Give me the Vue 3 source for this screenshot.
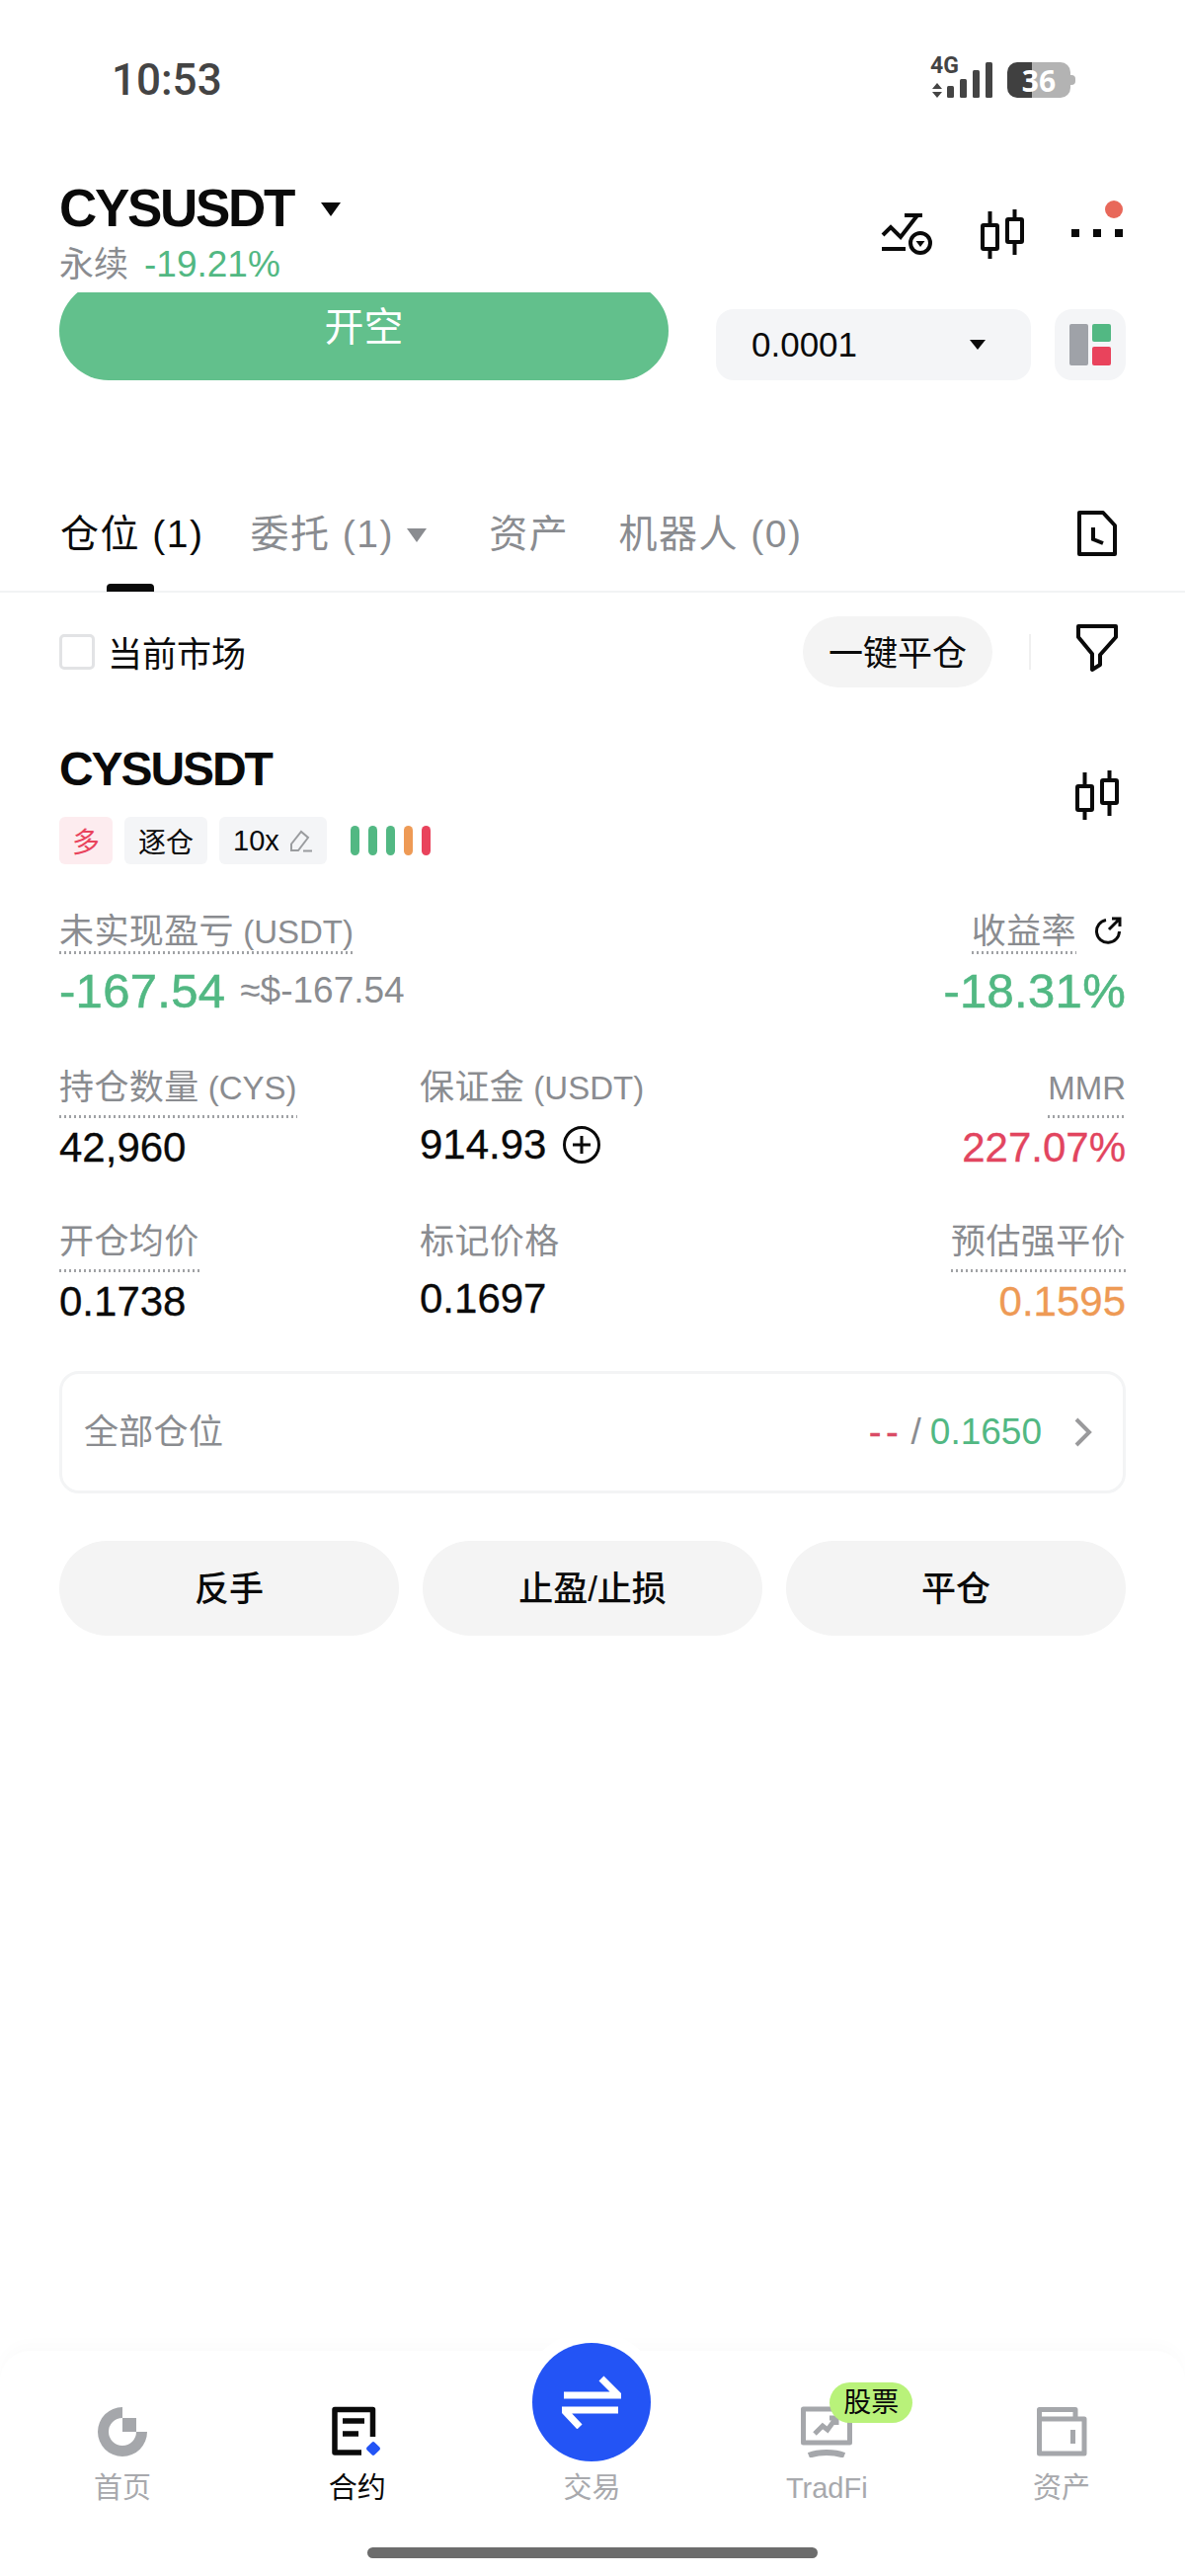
<template>
  <div class="page">
    <div class="status">
      <div class="time">10:53</div>
      <div class="status-right">
        <span class="net">4G</span>
        <svg class="signal" width="64" height="40" viewBox="0 0 64 40">
          <path d="M7 25l5 6H2zM7 40l5-6H2z" fill="#444" />
          <rect x="17" y="28" width="7" height="12" rx="1.5" fill="#444" />
          <rect x="30" y="21" width="7" height="19" rx="1.5" fill="#444" />
          <rect x="43" y="12" width="7" height="28" rx="1.5" fill="#444" />
          <rect x="56" y="4" width="7" height="36" rx="1.5" fill="#444" />
        </svg>
        <div class="battery"><span>36</span></div>
        <div class="battery-nub"></div>
      </div>
    </div>

    <div class="head">
      <div>
        <div class="symbol">
          <span>CYSUSDT</span>
          <i class="caret"></i>
        </div>
        <div class="sub">
          <span>永续</span>
          <span class="sub-pct">-19.21%</span>
        </div>
      </div>
      <div class="tools">
        <svg width="52" height="46" viewBox="0 0 52 46" fill="none" stroke="#0a0a0a" stroke-width="4">
          <path d="M2 24l8-8 10 10 17-22M24 4h18" />
          <path d="M1 38h24" />
          <circle cx="40" cy="32" r="10" />
          <path d="M35.5 30h9L40 36z" fill="#0a0a0a" stroke="none" />
        </svg>
        <svg class="candle" width="44" height="50" viewBox="0 0 44 50" fill="none" stroke="#0a0a0a" stroke-width="4">
          <path d="M9.500 2v14M9.500 40v10M34.500 0v10M34.500 33v13" />
          <rect x="2" y="16" width="15" height="24" rx="1" />
          <rect x="27" y="10" width="15" height="23" rx="1" />
        </svg>
        <div class="more">
          <i></i><i></i><i></i>
          <b class="more-dot"></b>
        </div>
      </div>
    </div>

    <div class="actions">
      <div class="open-clip">
        <div class="open-btn">开空</div>
      </div>
      <div class="step-select">
        <span>0.0001</span>
        <i class="caret small"></i>
      </div>
      <div class="layout-btn">
        <svg width="42" height="42" viewBox="0 0 42 42">
          <rect x="0" y="0" width="19" height="42" rx="2" fill="#9fa2a8" />
          <rect x="23" y="0" width="19" height="18" rx="2" fill="#52b883" />
          <rect x="23" y="23" width="19" height="19" rx="2" fill="#e9435c" />
        </svg>
      </div>
    </div>

    <div class="tabs">
      <div
        v-for="tab in tabs"
        :key="tab.name"
        class="tab"
        :class="{ active: tab.active }"
      >
        {{ tab.name }}
        <i v-if="tab.caret" class="caret tab-caret"></i>
        <b v-if="tab.active" class="tab-line"></b>
      </div>
      <svg class="history" width="42" height="48" viewBox="0 0 42 48" fill="none" stroke="#0a0a0a" stroke-width="4">
        <path d="M3 3h24l12 13v29H3z" stroke-linejoin="round" />
        <path d="M17 18v12l10 4" />
      </svg>
    </div>

    <div class="filter-row">
      <i class="checkbox"></i>
      <span class="filter-text">当前市场</span>
      <div class="close-all">一键平仓</div>
      <i class="divider"></i>
      <svg class="funnel" width="42" height="50" viewBox="0 0 42 50" fill="none" stroke="#0a0a0a" stroke-width="4" stroke-linejoin="round">
        <path d="M2 3h38v11L24 32v10l-8 5V31L2 14z" />
      </svg>
    </div>

    <div class="card-head">
      <div class="card-title">CYSUSDT</div>
      <svg class="card-candle" width="44" height="50" viewBox="0 0 44 50" fill="none" stroke="#0a0a0a" stroke-width="4">
        <path d="M9.500 2v14M9.500 40v10M34.500 0v10M34.500 33v13" />
        <rect x="2" y="16" width="15" height="24" rx="1" />
        <rect x="27" y="10" width="15" height="23" rx="1" />
      </svg>
    </div>

    <div class="tags">
      <div class="tag long">多</div>
      <div class="tag">逐仓</div>
      <div class="tag lev">
        10x
        <svg width="24" height="24" viewBox="0 0 24 24" fill="none" stroke="#9a9c9f" stroke-width="2">
          <path d="M2 15.500L12 3l7 6-10 13H2zM14 22.500h9" />
        </svg>
      </div>
      <div class="bars">
        <i v-for="(c, i) in bars" :key="i" :style="{ background: c }"></i>
      </div>
    </div>

    <div class="stats">
      <div
        v-for="s in stats"
        :key="s.label + s.unit"
        class="stat"
        :class="[s.col, { first: s.big, plain: s.plain }]"
      >
        <div class="label-row">
          <span class="label">{{ s.label }}<small v-if="s.unit">{{ s.unit }}</small></span>
          <svg v-if="s.share" class="share" width="28" height="28" viewBox="0 0 28 28" fill="none" stroke="#0a0a0a" stroke-width="3">
            <path d="M12 3.500A11.500 11.500 0 1 0 25.500 15" />
            <path d="M15 13L26 2M18 2h8v8" />
          </svg>
        </div>
        <div class="value" :class="s.color">
          {{ s.value }}
          <span v-if="s.usd" class="usd">{{ s.usd }}</span>
          <svg v-if="s.plus" class="plus" width="38" height="38" viewBox="0 0 38 38" fill="none" stroke="#0a0a0a" stroke-width="3">
            <circle cx="19" cy="19" r="17.500" />
            <path d="M19 10v18M10 19h18" />
          </svg>
        </div>
      </div>
    </div>

    <div class="all-pos">
      <span class="all-title">全部仓位</span>
      <div class="all-right">
        <span class="dashes">--</span>
        <span class="slash">/</span>
        <span class="green">0.1650</span>
        <svg width="18" height="30" viewBox="0 0 18 30" fill="none" stroke="#9a9a9c" stroke-width="4">
          <path d="M2 2l13 13L2 28" />
        </svg>
      </div>
    </div>

    <div class="btns">
      <div v-for="b in buttons" :key="b" class="btn">{{ b }}</div>
    </div>

    <div class="nav">
      <div class="nav-items">
        <div class="nav-item">
          <svg width="52" height="52" viewBox="0 0 52 52" fill="#a5a7ab">
            <path d="M26 1A25 25 0 1 0 51 26H40A14 14 0 1 1 26 12z" />
            <rect x="26" y="12" width="14" height="14" />
          </svg>
          <span>首页</span>
        </div>
        <div class="nav-item on">
          <svg width="52" height="52" viewBox="0 0 52 52" fill="none" stroke="#0a0a0a">
            <path d="M41.500 31V3.500H3V47h27" stroke-width="5.500" stroke-linejoin="round" />
            <path d="M11 15h22M11 28h16" stroke-width="5.500" />
            <rect x="36.500" y="37.500" width="11" height="11" rx="2" transform="rotate(45 42 43)" fill="#2354f5" stroke="none" />
          </svg>
          <span>合约</span>
        </div>
        <div class="nav-item trade">
          <div class="trade-btn">
            <svg width="60" height="54" viewBox="0 0 60 54" fill="none" stroke="#fff" stroke-width="7">
              <path d="M2 20h55L40 3M57 35H2l16 17" />
            </svg>
          </div>
          <span>交易</span>
        </div>
        <div class="nav-item">
          <div class="tradfi-icon">
            <svg width="52" height="52" viewBox="0 0 52 52" fill="none" stroke="#a5a7ab">
              <path d="M2.500 37V3h47v34z" stroke-width="5" stroke-linejoin="round" />
              <path d="M8 50c10-4 26-4 36 0" stroke-width="6" />
              <path d="M14 28l8-8 5 4 8-11M29 12h7v7" stroke-width="5" />
            </svg>
            <b class="stock-badge">股票</b>
          </div>
          <span class="latin">TradFi</span>
        </div>
        <div class="nav-item">
          <svg width="52" height="52" viewBox="0 0 52 52" fill="none" stroke="#a5a7ab" stroke-width="5" stroke-linejoin="round">
            <path d="M3.500 48V3.500H40V13h9v35zM3.500 13H40" />
            <rect x="35" y="24" width="5" height="14" fill="#a5a7ab" stroke="none" />
          </svg>
          <span>资产</span>
        </div>
      </div>
      <div class="home-bar"></div>
    </div>
  </div>
</template>

<script setup>
const tabs = [
  { name: "仓位 (1)", active: true },
  { name: "委托 (1)", caret: true },
  { name: "资产" },
  { name: "机器人 (0)" },
];

const bars = ["#52b883", "#52b883", "#52b883", "#ee9a55", "#e9435c"];

const stats = [
  { label: "未实现盈亏", unit: " (USDT)", value: "-167.54", usd: "≈$-167.54", color: "green", big: true },
  { label: "收益率", value: "-18.31%", color: "green", big: true, col: "col3", share: true },
  { label: "持仓数量", unit: " (CYS)", value: "42,960" },
  { label: "保证金", unit: " (USDT)", value: "914.93", plain: true, plus: true },
  { label: "", unit: "MMR", value: "227.07%", color: "red", col: "col3" },
  { label: "开仓均价", value: "0.1738" },
  { label: "标记价格", value: "0.1697", plain: true },
  { label: "预估强平价", value: "0.1595", color: "orange", col: "col3" },
];

const buttons = ["反手", "止盈/止损", "平仓"];
</script>

<style>
html,
body {
  margin: 0;
  background: #fff;
}
</style>

<style scoped>
.page {
  position: relative;
  width: 1200px;
  height: 2608px;
  display: flex;
  flex-direction: column;
  background: #fff;
  overflow: hidden;
  color: #0a0a0a;
  font-family: "Liberation Sans", "Noto Sans CJK SC", sans-serif;
}

.status {
  height: 121px;
  padding: 59px 111px 0 113px;
  display: flex;
  justify-content: space-between;
  align-items: flex-start;
}

.time {
  font-family: Roboto, sans-serif;
  font-weight: 500;
  font-size: 44px;
  line-height: 44px;
  color: #444;
}

.status-right {
  position: relative;
  display: flex;
  align-items: flex-start;
}

.net {
  position: absolute;
  left: 0;
  top: -4px;
  font-family: Roboto, sans-serif;
  font-weight: 700;
  font-size: 23px;
  line-height: 24px;
  color: #444;
}

.battery {
  margin: 4px 0 0 14px;
  width: 64px;
  height: 36px;
  border-radius: 10px;
  background: linear-gradient(to right, #404040 25px, #b3b3b3 25px);
  display: flex;
  align-items: center;
  justify-content: center;
  color: #fff;
  font-family: "Open Sans", sans-serif;
  font-weight: 700;
  font-size: 30px;
}

.battery-nub {
  margin-top: 17px;
  width: 5px;
  height: 10px;
  border-radius: 0 4px 4px 0;
  background: #b3b3b3;
}

.head {
  height: 116px;
  padding: 0 60px;
  display: flex;
  justify-content: space-between;
}

.symbol {
  display: flex;
  align-items: center;
  height: 60px;
  font-weight: 700;
  font-size: 53px;
  letter-spacing: -2.3px;
}

.caret {
  display: inline-block;
  width: 0;
  height: 0;
  border-left: 10px solid transparent;
  border-right: 10px solid transparent;
  border-top: 14px solid #0a0a0a;
}

.symbol .caret {
  margin: 4px 0 0 28px;
}

.sub {
  margin-top: 8px;
  font-size: 35px;
  line-height: 40px;
  color: #8a8c90;
}

.sub-pct {
  margin-left: 16px;
  font-size: 37px;
  color: #52b883;
}

.tools {
  display: flex;
  align-items: flex-start;
  padding: 32px 3px 0 0;
}

.tools > svg:first-child {
  margin-top: 2px;
}

.candle {
  margin-left: 49px;
}

.more {
  position: relative;
  margin-left: 48px;
  width: 52px;
  height: 36px;
  display: flex;
  justify-content: space-between;
  align-items: flex-start;
  padding-top: 20px;
  box-sizing: border-box;
}

.more i {
  width: 8px;
  height: 8px;
  background: #0a0a0a;
}

.more-dot {
  position: absolute;
  right: 0;
  top: -9px;
  width: 18px;
  height: 18px;
  border-radius: 50%;
  background: #e8685a;
}

.actions {
  height: 89px;
  padding: 0 60px;
  display: flex;
  align-items: flex-start;
}

.open-clip {
  width: 617px;
  height: 89px;
  overflow: hidden;
}

.open-btn {
  margin-top: -11px;
  height: 100px;
  padding-bottom: 14px;
  box-sizing: border-box;
  border-radius: 50px;
  background: #62c08c;
  color: #fff;
  font-size: 40px;
  display: flex;
  align-items: center;
  justify-content: center;
}

.step-select {
  margin: 17px 0 0 48px;
  width: 319px;
  height: 72px;
  padding: 0 46px 0 36px;
  box-sizing: border-box;
  border-radius: 18px;
  background: #f4f5f7;
  display: flex;
  align-items: center;
  justify-content: space-between;
  font-size: 35px;
}

.caret.small {
  border-left-width: 8px;
  border-right-width: 8px;
  border-top-width: 10px;
}

.layout-btn {
  margin: 17px 0 0 24px;
  width: 72px;
  height: 72px;
  border-radius: 18px;
  background: #f4f5f7;
  display: flex;
  align-items: center;
  justify-content: center;
}

.tabs {
  margin-top: 114px;
  height: 101px;
  box-sizing: border-box;
  padding: 17px 68px 0 61px;
  border-bottom: 2px solid #f2f3f4;
  display: flex;
  align-items: flex-start;
  gap: 47px;
}

.tab {
  position: relative;
  font-size: 39px;
  letter-spacing: 1.5px;
  line-height: 50px;
  white-space: nowrap;
  color: #8a8c90;
}

.tab:nth-child(4) {
  margin-left: 3px;
}

.tab.active {
  color: #0a0a0a;
}

.tab-caret {
  margin: 0 16px 4px 1px;
  vertical-align: middle;
  border-top-color: #8a8c90;
}

.tab-line {
  position: absolute;
  left: 47px;
  top: 75px;
  width: 48px;
  height: 8px;
  border-radius: 4px 4px 0 0;
  background: #0a0a0a;
}

.history {
  margin-left: auto;
}

.filter-row {
  margin-top: 24px;
  height: 72px;
  padding: 0 68px 0 60px;
  display: flex;
  align-items: center;
}

.checkbox {
  width: 36px;
  height: 36px;
  box-sizing: border-box;
  border: 3px solid #e2e3e5;
  border-radius: 5px;
}

.filter-text {
  margin: -2px 0 0 13px;
  font-size: 35px;
}

.close-all {
  margin-left: auto;
  width: 192px;
  height: 72px;
  padding-bottom: 3px;
  box-sizing: border-box;
  border-radius: 36px;
  background: #f4f4f4;
  display: flex;
  align-items: center;
  justify-content: center;
  font-size: 35px;
}

.divider {
  margin-left: 37px;
  width: 2px;
  height: 36px;
  background: #f0f0f0;
}

.funnel {
  margin: -8px 0 0 46px;
}

.card-head {
  margin-top: 58px;
  height: 50px;
  padding: 0 67px 0 60px;
  display: flex;
  justify-content: space-between;
  align-items: flex-start;
}

.card-title {
  font-weight: 700;
  font-size: 48px;
  letter-spacing: -2.1px;
  line-height: 50px;
}

.card-candle {
  margin-top: 26px;
}

.tags {
  margin-top: 23px;
  height: 48px;
  padding: 0 60px;
  display: flex;
  align-items: center;
  gap: 12px;
}

.tag {
  height: 48px;
  padding: 0 14px;
  border-radius: 6px;
  background: #f4f5f7;
  display: flex;
  align-items: center;
  font-size: 28px;
}

.tag.long {
  padding: 0 13px;
  background: #fdecef;
  color: #e9435c;
}

.tag.lev {
  gap: 10px;
  font-size: 29px;
}

.bars {
  margin-left: 12px;
  display: flex;
  gap: 9px;
}

.bars i {
  width: 9px;
  height: 30px;
  border-radius: 5px;
}

.stats {
  margin-top: 45px;
  padding: 0 60px;
  display: grid;
  grid-template-columns: 365px 1fr auto;
  row-gap: 50px;
}

.stat {
  display: flex;
  flex-direction: column;
  align-items: flex-start;
}

.stat.col3 {
  grid-column: 3;
  align-items: flex-end;
}

.label-row {
  display: flex;
  align-items: flex-start;
  height: 54px;
}

.label {
  height: 40px;
  padding: 3px 0 11px;
  font-size: 35px;
  letter-spacing: 0.4px;
  line-height: 40px;
  white-space: nowrap;
  color: #8a8c90;
  background-image: linear-gradient(to right, #a0a2a5 50%, transparent 50%);
  background-size: 5px 3px;
  background-position: left bottom;
  background-repeat: repeat-x;
}

.label small {
  font-size: 33px;
  letter-spacing: 0;
}

.stat.plain .label {
  background: none;
}

.stat.plain .label-row {
  height: 51px;
}

.stat.first .label-row {
  height: 46px;
}

.stat.first .label {
  padding-bottom: 3px;
}

.share {
  margin: 8px 4px 0 18px;
}

.value {
  margin-top: 8px;
  display: flex;
  align-items: center;
  height: 44px;
  font-size: 42px;
  white-space: nowrap;
  -webkit-text-stroke: 0.3px currentColor;
}

.stat.first .value {
  margin-top: 11px;
  height: 51px;
  font-size: 49px;
  letter-spacing: 0.3px;
  -webkit-text-stroke: 0.6px currentColor;
}

.usd {
  margin-left: 15px;
  font-size: 37px;
  letter-spacing: 0;
  color: #8a8c90;
  -webkit-text-stroke: 0;
}

.plus {
  margin-left: 17px;
}

.green {
  color: #52b883;
}

.red {
  color: #e2455f;
}

.orange {
  color: #ee9a55;
}

.all-pos {
  margin: 48px 60px 0;
  height: 124px;
  padding: 0 31px 0 22px;
  box-sizing: border-box;
  border: 3px solid #f3f4f5;
  border-radius: 20px;
  display: flex;
  align-items: center;
  justify-content: space-between;
}

.all-title {
  margin-top: -7px;
  font-size: 35px;
  letter-spacing: 0.3px;
  color: #8a8c90;
}

.all-right {
  display: flex;
  align-items: center;
  font-size: 37px;
}

.dashes {
  letter-spacing: 5px;
  color: #d94b66;
  -webkit-text-stroke: 0.6px currentColor;
}

.slash {
  margin: 0 9px 0 8px;
  color: #8a8c90;
}

.all-right svg {
  margin-left: 33px;
}

.btns {
  margin-top: 48px;
  padding: 0 60px;
  display: flex;
  gap: 24px;
}

.btn {
  flex: 1;
  height: 96px;
  padding-bottom: 5px;
  box-sizing: border-box;
  border-radius: 48px;
  background: #f4f4f4;
  display: flex;
  align-items: center;
  justify-content: center;
  font-size: 35px;
  font-weight: 500;
}

.nav {
  margin-top: auto;
  height: 228px;
  border-radius: 30px 30px 0 0;
  background: #fff;
  box-shadow: 0 -8px 14px rgba(0, 0, 0, 0.015);
}

.nav-items {
  padding: 56px 6px 0 5px;
  display: grid;
  grid-template-columns: repeat(5, 1fr);
}

.nav-item {
  display: flex;
  flex-direction: column;
  align-items: center;
}

.nav-item > span {
  margin-top: 13px;
  font-size: 29px;
  line-height: 36px;
  color: #a8a9ad;
}

.nav-item.on > span {
  color: #0a0a0a;
}

.trade-btn {
  margin: -64px 0 -4px;
  width: 120px;
  height: 120px;
  border-radius: 50%;
  background: #2354f5;
  box-shadow: 0 0 0 12px #fff;
  display: flex;
  align-items: center;
  justify-content: center;
}

.tradfi-icon {
  position: relative;
  width: 52px;
  height: 52px;
}

.stock-badge {
  position: absolute;
  left: 29px;
  top: -24px;
  width: 84px;
  height: 41px;
  border-radius: 21px;
  background: #b9f27a;
  color: #0a0a0a;
  font-size: 28px;
  font-weight: 400;
  line-height: 41px;
  text-align: center;
}

.home-bar {
  margin: 42px auto 0;
  width: 456px;
  height: 11px;
  border-radius: 6px;
  background: #6c6c6c;
}
</style>
